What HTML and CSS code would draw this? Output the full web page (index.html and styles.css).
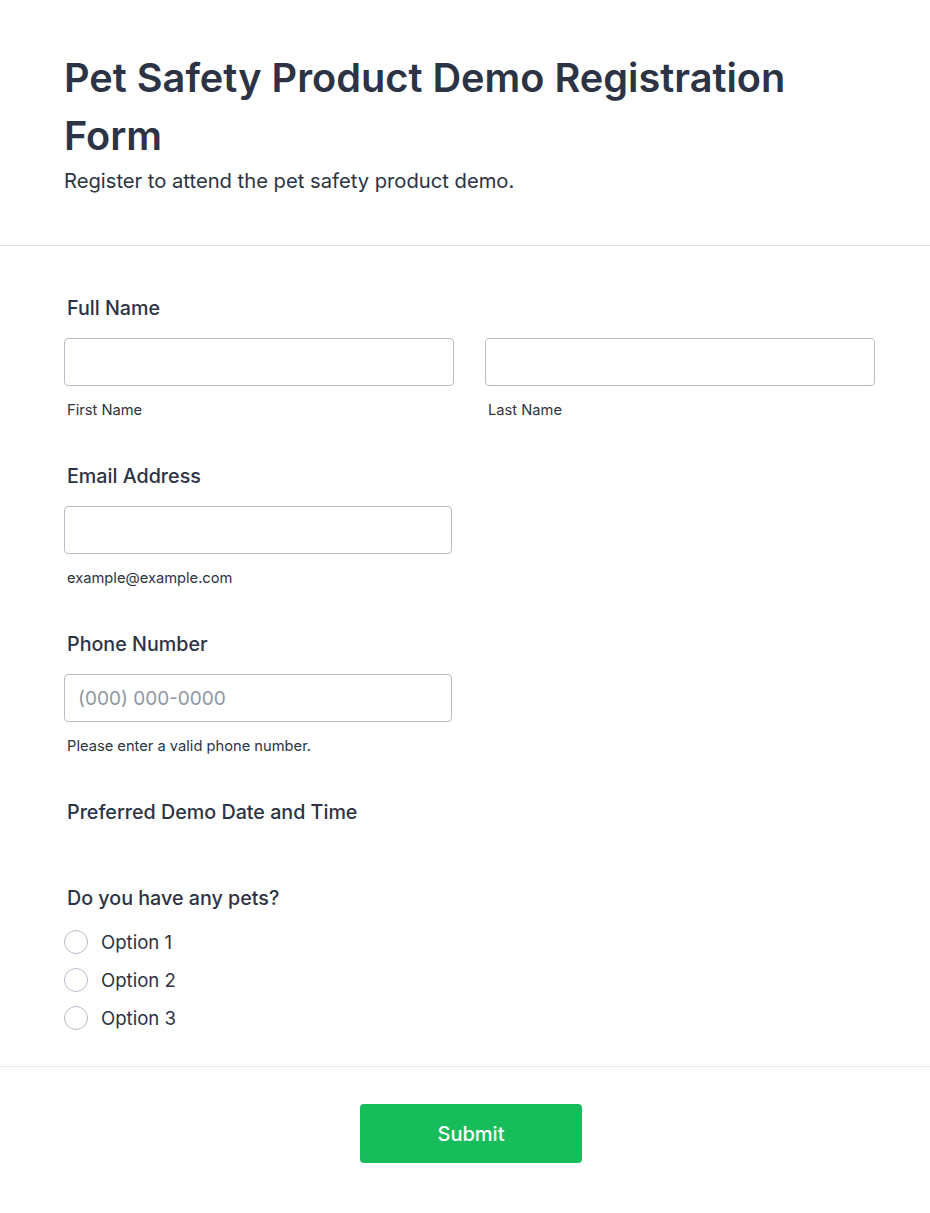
FILE: index.html
```html
<!DOCTYPE html>
<html lang="en">
<head>
<meta charset="utf-8">
<title>Pet Safety Product Demo Registration Form</title>
<link rel="stylesheet" href="styles.css">
</head>
<body>
<div class="form">
  <header class="form-header">
    <h1 class="title">Pet Safety Product Demo Registration Form</h1>
    <p class="subtitle">Register to attend the pet safety product demo.</p>
  </header>
  <main class="form-body">
    <div class="field">
      <label class="label">Full Name</label>
      <div class="row">
        <div class="col">
          <input class="input" type="text">
          <span class="sublabel">First Name</span>
        </div>
        <div class="col">
          <input class="input" type="text">
          <span class="sublabel">Last Name</span>
        </div>
      </div>
    </div>
    <div class="field">
      <label class="label">Email Address</label>
      <div class="col half">
        <input class="input" type="email">
        <span class="sublabel">example@example.com</span>
      </div>
    </div>
    <div class="field">
      <label class="label">Phone Number</label>
      <div class="col half">
        <input class="input" type="tel" placeholder="(000) 000-0000">
        <span class="sublabel">Please enter a valid phone number.</span>
      </div>
    </div>
    <div class="field field-date">
      <label class="label">Preferred Demo Date and Time</label>
    </div>
    <div class="field field-radio">
      <label class="label">Do you have any pets?</label>
      <div class="options">
        <label class="option"><span class="radio"></span><span class="option-text">Option 1</span></label>
        <label class="option"><span class="radio"></span><span class="option-text">Option 2</span></label>
        <label class="option"><span class="radio"></span><span class="option-text">Option 3</span></label>
      </div>
    </div>
  </main>
  <footer class="form-footer">
    <button class="submit" type="button">Submit</button>
  </footer>
</div>
</body>
</html>
```
FILE: styles.css
```css
* { box-sizing: border-box; }
html, body {
  margin: 0;
  padding: 0;
  background: #ffffff;
}
body {
  font-family: Inter, "Noto Sans", "Liberation Sans", sans-serif;
  color: #2c3345;
}
.form-header {
  padding: 49px 64px 49px 64px;
  border-bottom: 1px solid #dcdfe5;
}
.title {
  margin: 0;
  font-size: 39.7px;
  line-height: 58px;
  font-weight: 600;
  color: #2c3345;
}
.subtitle {
  margin: 1px 0 0 0;
  font-size: 20.2px;
  line-height: 30px;
  font-weight: 400;
}
.form-body {
  padding: 47px 55px 36px 64px;
  border-bottom: 1px solid #e6e8ec;
}
.field {
  margin-bottom: 41px;
}
.label {
  display: block;
  padding-left: 3px;
  font-size: 19.7px;
  line-height: 30px;
  font-weight: 500;
  margin-bottom: 15px;
}
.row {
  display: flex;
  gap: 31px;
}
.col {
  display: flex;
  flex-direction: column;
  flex: 1;
}
.col.half {
  width: 388px;
  flex: none;
}
.input {
  display: block;
  width: 100%;
  height: 48px;
  border: 1px solid #b8bdc9;
  border-radius: 4px;
  padding: 0 13px;
  font-family: inherit;
  font-size: 19px;
  color: #2c3345;
  background: #fff;
  outline: none;
}
.input::placeholder {
  color: #8f96a3;
}
.sublabel {
  display: block;
  margin-top: 14px;
  padding-left: 3px;
  font-size: 14.7px;
  line-height: 20px;
  color: #2c3345;
}
.field-date {
  margin-bottom: 56px;
}
.field-date .label {
  margin-bottom: 0;
}
.field-radio {
  margin-bottom: 0;
}
.field-radio .label {
  margin-bottom: 17px;
}
.options {
  display: flex;
  flex-direction: column;
  gap: 14px;
}
.option {
  display: flex;
  align-items: center;
  height: 24px;
}
.radio {
  width: 24px;
  height: 24px;
  border: 1px solid #b8bdc9;
  border-radius: 50%;
  flex: none;
}
.option-text {
  margin-left: 13px;
  font-size: 18.6px;
  line-height: 24px;
}
.form-footer {
  display: flex;
  justify-content: center;
  padding: 37px 0 50px 12px;
}
.submit {
  width: 222px;
  height: 59px;
  border: none;
  border-radius: 4px;
  background: #18bd5b;
  color: #ffffff;
  font-family: inherit;
  font-size: 20px;
  font-weight: 500;
  cursor: pointer;
}
```
